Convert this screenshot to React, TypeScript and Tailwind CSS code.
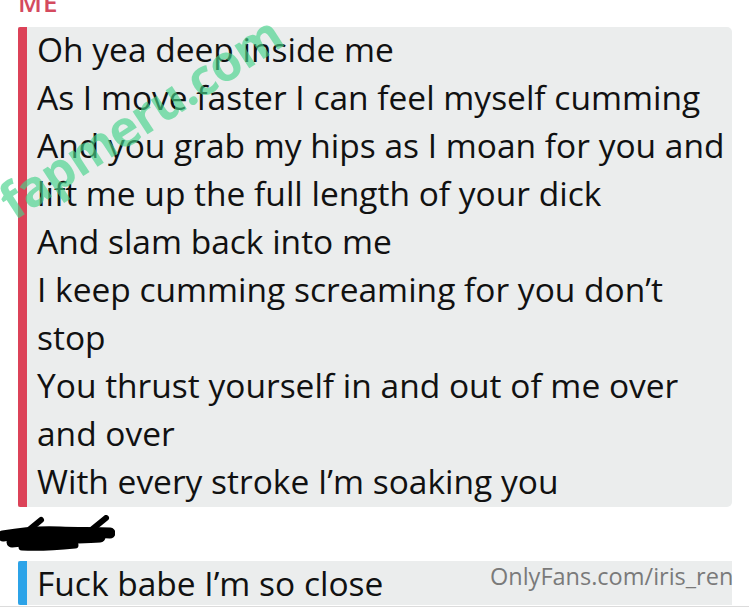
import React from "react";

const lines = [
  "Oh yea deep inside me",
  "As I move faster I can feel myself cumming",
  "And you grab my hips as I moan for you and",
  "lift me up the full length of your dick",
  "And slam back into me",
  "I keep cumming screaming for you don\u2019t",
  "stop",
  "You thrust yourself in and out of me over",
  "and over",
  "With every stroke I\u2019m soaking you",
];

export default function App() {
  return (
    <div
      className="relative w-[749px] h-[610px] overflow-hidden bg-white"
      style={{ fontFamily: '"Open Sans", "Liberation Sans", sans-serif' }}
    >
      <div className="h-[27px] pl-[18px] flex items-end">
        <span className="text-[#d44a5e] text-[26px] font-semibold leading-none tracking-[1px] -translate-y-[12px]">ME</span>
      </div>
      <div className="ml-[18px] w-[714px] flex bg-[#ebeded] rounded-r-[5px]">
        <div className="w-[9px] bg-[#dc4258] shrink-0 rounded-l-[2px]" />
        <div className="pl-[10px] text-[#111] text-[33.5px] leading-[48px] tracking-[0px]">
          {lines.map((l, i) => (
            <div key={i} className="whitespace-nowrap -translate-y-[2px]">{l}</div>
          ))}
        </div>
      </div>
      <div className="h-[54px] relative">
        <svg className="absolute left-0 top-[8px]" width="115" height="40" viewBox="0 0 115 40">
          <path d="M3 21 C20 18 40 16 60 17 C78 18 95 17 110 18" stroke="#000" strokeWidth="11" fill="none" strokeLinecap="round" />
          <path d="M12 27 C35 25 60 24 100 22" stroke="#000" strokeWidth="11" fill="none" strokeLinecap="round" />
          <path d="M30 14 L41 5" stroke="#000" strokeWidth="6" strokeLinecap="round" />
          <path d="M90 16 L106 3" stroke="#000" strokeWidth="6" strokeLinecap="round" />
          <path d="M22 32 C40 33 55 32 75 30" stroke="#000" strokeWidth="7" fill="none" strokeLinecap="round" />
        </svg>
      </div>
      <div className="ml-[18px] w-[714px] h-[44px] flex bg-[#ebeded]">
        <div className="w-[9px] bg-[#2ca3e8] shrink-0 rounded-l-[2px]" />
        <div className="pl-[10px] text-[#111] text-[33.5px] leading-[44px] whitespace-nowrap">
          Fuck babe I{"\u2019"}m so close
        </div>
      </div>
      <div className="h-[1px] bg-[#dcdcdc] mt-[1px]" />
      <div
        className="absolute left-[4px] text-[#45d38a]/65 text-[50px] font-bold leading-none -rotate-[33deg] origin-left whitespace-nowrap tracking-[-1px]"
        style={{ top: 180 }}
      >
        fapmeru.com
      </div>
      <div className="absolute left-[490px] top-[561px] text-[#7a7a7a] text-[23.5px] leading-[30px]">
        OnlyFans.com/iris_ren
      </div>
    </div>
  );
}
